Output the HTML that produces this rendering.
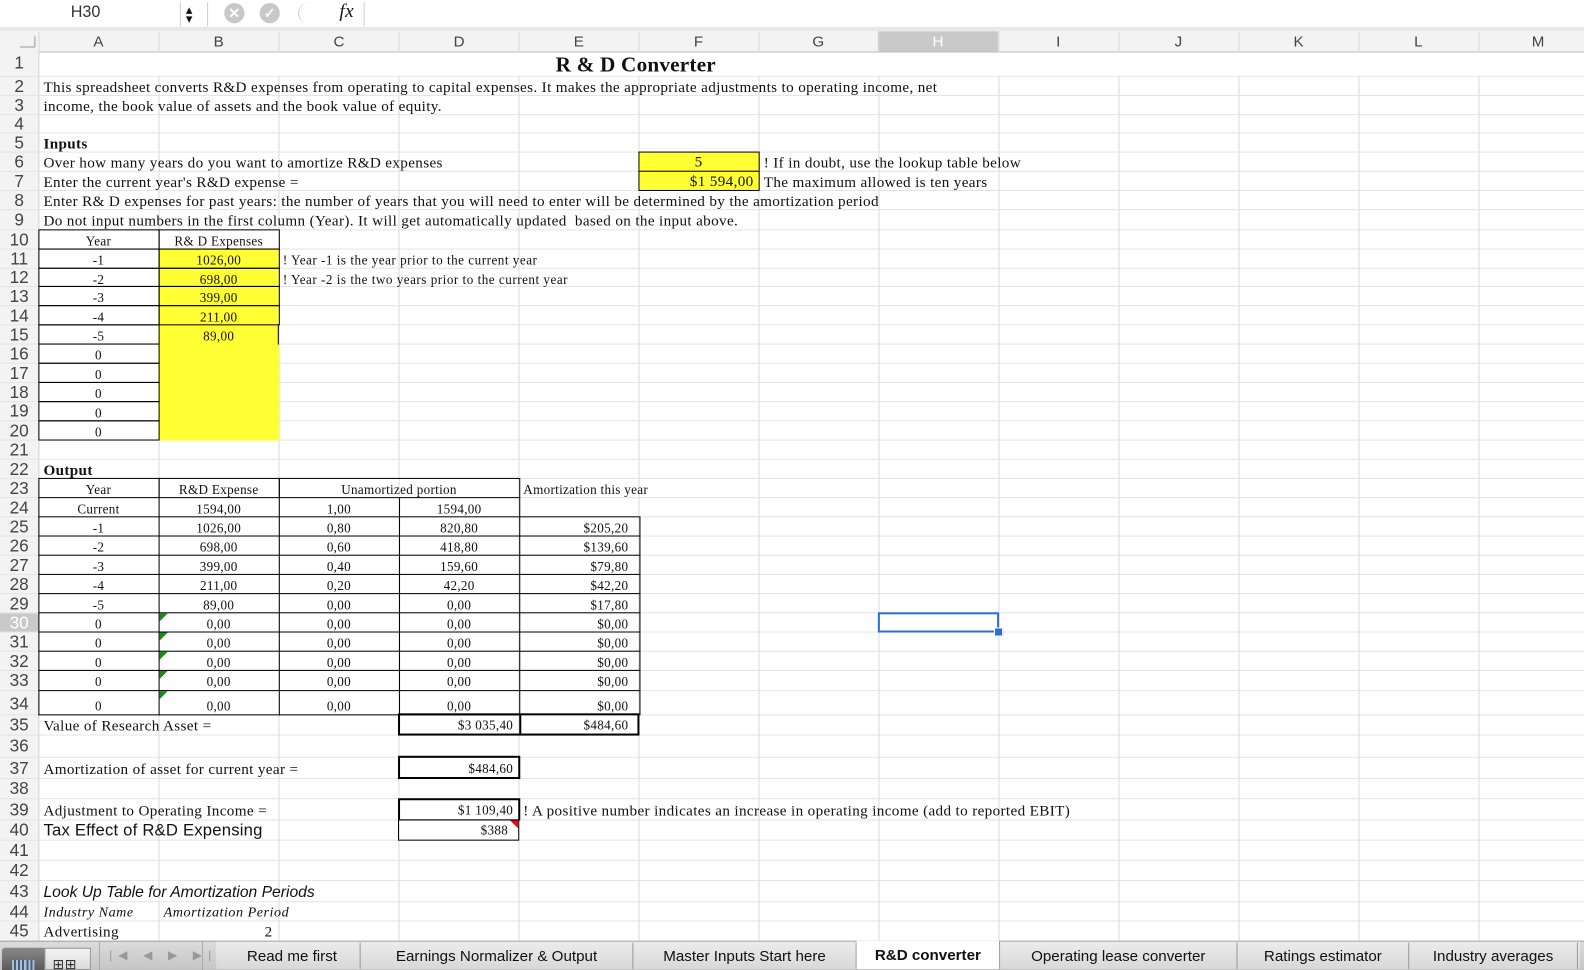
<!DOCTYPE html>
<html><head><meta charset="utf-8"><style>
html,body{margin:0;padding:0;width:1584px;height:970px;overflow:hidden;background:#fff}
#w{position:absolute;left:0;top:0;width:1568px;height:960px;transform:scale(1.0102,1.0104);transform-origin:0 0;overflow:hidden}
.a{position:absolute}
.t{position:absolute;font-family:"Liberation Serif",serif;font-size:15px;letter-spacing:0.35px;line-height:16px;padding-top:2px;white-space:nowrap;color:#111}
.s{font-size:13px;letter-spacing:0.3px}
.c{text-align:center}
.r{text-align:right}
.rl{position:absolute;left:0;width:1568px;height:1px;background:#e4e4e4}
.rn{position:absolute;left:0;width:38px;text-align:center;font-family:"Liberation Sans",sans-serif;font-size:17px;color:#444;line-height:18px;padding-top:1px}
.ch{position:absolute;top:33px;height:18px;text-align:center;font-family:"Liberation Sans",sans-serif;font-size:15px;color:#444;line-height:18px}
.bx{position:absolute;border:1px solid #000;box-sizing:border-box}
.y{background:#ffff33}
.g{position:absolute;width:0;height:0;border-top:8px solid #1a8a1a;border-right:8px solid transparent}
.tab{position:absolute;top:933px;height:26px;line-height:24px;font-family:"Liberation Sans",sans-serif;font-size:15px;color:#111;text-align:center;border-right:1px solid #999;box-sizing:border-box}
</style></head><body><div id="w">
<div class="a" style="left:0;top:0;width:1568px;height:27px;background:#fff;border-bottom:1px solid #bbb"></div>
<div class="a" style="left:0;top:27px;width:1568px;height:4px;background:#e8e8e8"></div>
<div class="t" style="left:70px;top:3px;font-family:'Liberation Sans',sans-serif;font-size:16px;letter-spacing:0;color:#333">H30</div>
<div class="a" style="left:178px;top:2px;width:1px;height:24px;background:#ccc"></div>
<div class="t" style="left:184px;top:3px;font-size:13px;font-family:'Liberation Sans',sans-serif;line-height:9px">▴<br>▾</div>
<div class="a" style="left:205px;top:2px;width:1px;height:24px;background:#ccc"></div>
<div class="a" style="left:222px;top:3px;width:20px;height:20px;border-radius:50%;background:#c8c8c8;color:#fff;font:bold 14px/20px 'Liberation Sans',sans-serif;text-align:center">✕</div>
<div class="a" style="left:257px;top:3px;width:20px;height:20px;border-radius:50%;background:#c8c8c8;color:#fff;font:bold 14px/20px 'Liberation Sans',sans-serif;text-align:center">✓</div>
<div class="a" style="left:295px;top:2px;width:22px;height:22px;border-radius:50%;border-left:1px solid #ccc"></div>
<div class="t" style="left:336px;top:0px;font-style:italic;font-size:19px;line-height:20px">fx</div>
<div class="a" style="left:360px;top:2px;width:1px;height:24px;background:#ccc"></div>
<div class="a" style="left:0;top:31px;width:1568px;height:20px;background:#f3f3f3;border-bottom:1px solid #bbb"></div>
<div class="a" style="left:869px;top:31px;width:119px;height:20px;background:#c9c9c9"></div>
<div class="a" style="left:0;top:51px;width:38px;height:880px;background:#f3f3f3;border-right:1px solid #bbb"></div>
<div class="a" style="left:0;top:607px;width:38px;height:19px;background:#c9c9c9"></div>
<div class="a" style="left:20px;top:46px;width:14px;height:1px;background:#999"></div>
<div class="a" style="left:34px;top:36px;width:1px;height:11px;background:#999"></div>
<div class="a" style="left:38px;top:31px;width:1530px;height:900px;background:repeating-linear-gradient(to right,#d8d8d8 0,#d8d8d8 1px,transparent 1px,transparent 118.8px)"></div>
<div class="ch" style="left:38px;width:119px">A</div><div class="ch" style="left:157px;width:119px">B</div><div class="ch" style="left:276px;width:119px">C</div><div class="ch" style="left:395px;width:119px">D</div><div class="ch" style="left:514px;width:118px">E</div><div class="ch" style="left:632px;width:119px">F</div><div class="ch" style="left:751px;width:118px">G</div><div class="ch" style="left:869px;width:119px;color:#fff">H</div><div class="ch" style="left:988px;width:119px">I</div><div class="ch" style="left:1107px;width:119px">J</div><div class="ch" style="left:1226px;width:119px">K</div><div class="ch" style="left:1345px;width:118px">L</div><div class="ch" style="left:1463px;width:119px">M</div>
<div class="rl" style="top:75px"></div><div class="rl" style="top:94px"></div><div class="rl" style="top:113px"></div><div class="rl" style="top:131px"></div><div class="rl" style="top:150px"></div><div class="rl" style="top:169px"></div><div class="rl" style="top:188px"></div><div class="rl" style="top:207px"></div><div class="rl" style="top:227px"></div><div class="rl" style="top:246px"></div><div class="rl" style="top:265px"></div><div class="rl" style="top:283px"></div><div class="rl" style="top:302px"></div><div class="rl" style="top:321px"></div><div class="rl" style="top:340px"></div><div class="rl" style="top:359px"></div><div class="rl" style="top:378px"></div><div class="rl" style="top:397px"></div><div class="rl" style="top:416px"></div><div class="rl" style="top:435px"></div><div class="rl" style="top:454px"></div><div class="rl" style="top:473px"></div><div class="rl" style="top:492px"></div><div class="rl" style="top:511px"></div><div class="rl" style="top:530px"></div><div class="rl" style="top:549px"></div><div class="rl" style="top:568px"></div><div class="rl" style="top:587px"></div><div class="rl" style="top:606px"></div><div class="rl" style="top:625px"></div><div class="rl" style="top:644px"></div><div class="rl" style="top:663px"></div><div class="rl" style="top:683px"></div><div class="rl" style="top:707px"></div><div class="rl" style="top:727px"></div><div class="rl" style="top:749px"></div><div class="rl" style="top:770px"></div><div class="rl" style="top:790px"></div><div class="rl" style="top:811px"></div><div class="rl" style="top:831px"></div><div class="rl" style="top:851px"></div><div class="rl" style="top:871px"></div><div class="rl" style="top:892px"></div><div class="rl" style="top:911px"></div>
<div class="rn" style="top:53px">1</div><div class="rn" style="top:76px">2</div><div class="rn" style="top:95px">3</div><div class="rn" style="top:113px">4</div><div class="rn" style="top:132px">5</div><div class="rn" style="top:151px">6</div><div class="rn" style="top:170px">7</div><div class="rn" style="top:189px">8</div><div class="rn" style="top:208px">9</div><div class="rn" style="top:228px">10</div><div class="rn" style="top:247px">11</div><div class="rn" style="top:265px">12</div><div class="rn" style="top:284px">13</div><div class="rn" style="top:303px">14</div><div class="rn" style="top:322px">15</div><div class="rn" style="top:341px">16</div><div class="rn" style="top:360px">17</div><div class="rn" style="top:379px">18</div><div class="rn" style="top:397px">19</div><div class="rn" style="top:417px">20</div><div class="rn" style="top:436px">21</div><div class="rn" style="top:455px">22</div><div class="rn" style="top:474px">23</div><div class="rn" style="top:493px">24</div><div class="rn" style="top:512px">25</div><div class="rn" style="top:531px">26</div><div class="rn" style="top:550px">27</div><div class="rn" style="top:569px">28</div><div class="rn" style="top:588px">29</div><div class="rn" style="top:607px;color:#fff">30</div><div class="rn" style="top:626px">31</div><div class="rn" style="top:645px">32</div><div class="rn" style="top:664px">33</div><div class="rn" style="top:687px">34</div><div class="rn" style="top:708px">35</div><div class="rn" style="top:729px">36</div><div class="rn" style="top:751px">37</div><div class="rn" style="top:771px">38</div><div class="rn" style="top:792px">39</div><div class="rn" style="top:812px">40</div><div class="rn" style="top:832px">41</div><div class="rn" style="top:852px">42</div><div class="rn" style="top:873px">43</div><div class="rn" style="top:893px">44</div><div class="rn" style="top:912px">45</div>
<div class="a" style="left:39px;top:52px;width:1529px;height:23px;background:#fff"></div>
<div class="t" style="left:550px;top:51px;font-size:21px;letter-spacing:0.2px;line-height:22px;font-weight:bold">R &amp; D Converter</div>
<div class="t" style="left:43px;top:77px">This spreadsheet converts R&amp;D expenses from operating to capital expenses. It makes the appropriate adjustments to operating income, net</div>
<div class="t" style="left:43px;top:96px">income, the book value of assets and the book value of equity.</div>
<div class="t" style="left:43px;top:133px;font-weight:bold">Inputs</div>
<div class="t" style="left:43px;top:152px">Over how many years do you want to amortize R&amp;D expenses</div>
<div class="t" style="left:43px;top:171px">Enter the current year's R&amp;D expense =</div>
<div class="t" style="left:43px;top:190px">Enter R&amp; D expenses for past years: the number of years that you will need to enter will be determined by the amortization period</div>
<div class="t" style="left:43px;top:209px">Do not input numbers in the first column (Year). It will get automatically updated&nbsp; based on the input above.</div>
<div class="bx y" style="left:632px;top:150px;width:120px;height:20px"></div>
<div class="bx y" style="left:632px;top:169px;width:120px;height:20px"></div>
<div class="t c" style="left:632px;top:151px;width:119px">5</div>
<div class="t r" style="left:632px;top:170px;width:114px">$1 594,00</div>
<div class="t" style="left:756px;top:152px">! If in doubt, use the lookup table below</div>
<div class="t" style="left:756px;top:171px">The maximum allowed is ten years</div>
<div class="a y" style="left:157px;top:246px;width:119px;height:190px"></div>
<div class="bx" style="left:38px;top:227px;width:120px;height:20px"></div><div class="bx" style="left:157px;top:227px;width:120px;height:20px"></div>
<div class="bx" style="left:38px;top:246px;width:120px;height:20px"></div><div class="bx" style="left:157px;top:246px;width:120px;height:20px"></div>
<div class="bx" style="left:38px;top:265px;width:120px;height:19px"></div><div class="bx" style="left:157px;top:265px;width:120px;height:19px"></div>
<div class="bx" style="left:38px;top:283px;width:120px;height:20px"></div><div class="bx" style="left:157px;top:283px;width:120px;height:20px"></div>
<div class="bx" style="left:38px;top:302px;width:120px;height:20px"></div><div class="bx" style="left:157px;top:302px;width:120px;height:20px"></div>
<div class="bx" style="left:38px;top:321px;width:120px;height:20px"></div><div class="a" style="left:275px;top:321px;width:1px;height:20px;background:#000"></div>
<div class="bx" style="left:38px;top:340px;width:120px;height:20px"></div>
<div class="bx" style="left:38px;top:359px;width:120px;height:20px"></div>
<div class="bx" style="left:38px;top:378px;width:120px;height:20px"></div>
<div class="bx" style="left:38px;top:397px;width:120px;height:20px"></div>
<div class="bx" style="left:38px;top:416px;width:120px;height:20px"></div>
<div class="t s c" style="left:38px;top:229px;width:119px">Year</div><div class="t s c" style="left:157px;top:229px;width:119px">R&amp; D Expenses</div>
<div class="t s c" style="left:38px;top:248px;width:119px">-1</div><div class="t s c" style="left:157px;top:248px;width:119px">1026,00</div>
<div class="t s c" style="left:38px;top:267px;width:119px">-2</div><div class="t s c" style="left:157px;top:267px;width:119px">698,00</div>
<div class="t s c" style="left:38px;top:285px;width:119px">-3</div><div class="t s c" style="left:157px;top:285px;width:119px">399,00</div>
<div class="t s c" style="left:38px;top:304px;width:119px">-4</div><div class="t s c" style="left:157px;top:304px;width:119px">211,00</div>
<div class="t s c" style="left:38px;top:323px;width:119px">-5</div><div class="t s c" style="left:157px;top:323px;width:119px">89,00</div>
<div class="t s c" style="left:38px;top:342px;width:119px">0</div><div class="t s c" style="left:38px;top:361px;width:119px">0</div><div class="t s c" style="left:38px;top:380px;width:119px">0</div><div class="t s c" style="left:38px;top:399px;width:119px">0</div><div class="t s c" style="left:38px;top:418px;width:119px">0</div>
<div class="t s" style="left:280px;top:248px;letter-spacing:0.5px">! Year -1 is the year prior to the current year</div>
<div class="t s" style="left:280px;top:267px;letter-spacing:0.5px">! Year -2 is the two years prior to the current year</div>
<div class="t" style="left:43px;top:456px;font-weight:bold">Output</div>
<div class="bx" style="left:38px;top:473px;width:120px;height:20px"></div><div class="bx" style="left:157px;top:473px;width:120px;height:20px"></div><div class="bx" style="left:276px;top:473px;width:239px;height:20px"></div>
<div class="t s c" style="left:38px;top:475px;width:119px">Year</div><div class="t s c" style="left:157px;top:475px;width:119px">R&amp;D Expense</div><div class="t s c" style="left:276px;top:475px;width:238px">Unamortized portion</div><div class="t s" style="left:518px;top:475px">Amortization this year</div>
<div class="a" style="left:38px;top:492px;width:477px;height:216px;background:linear-gradient(#000,#000) 119px 0/1px 100% no-repeat,linear-gradient(#000,#000) 238px 0/1px 100% no-repeat,linear-gradient(#000,#000) 357px 0/1px 100% no-repeat,linear-gradient(#000,#000) 0 0/1px 100% no-repeat,linear-gradient(#000,#000) 476px 0/1px 100% no-repeat"></div>
<div class="a" style="left:514px;top:511px;width:119px;height:197px;border-right:1px solid #000"></div>
<div class="a" style="left:38px;top:511px;width:595px;height:1px;background:#000"></div><div class="a" style="left:38px;top:530px;width:595px;height:1px;background:#000"></div><div class="a" style="left:38px;top:549px;width:595px;height:1px;background:#000"></div><div class="a" style="left:38px;top:568px;width:595px;height:1px;background:#000"></div><div class="a" style="left:38px;top:587px;width:595px;height:1px;background:#000"></div><div class="a" style="left:38px;top:606px;width:595px;height:1px;background:#000"></div><div class="a" style="left:38px;top:625px;width:595px;height:1px;background:#000"></div><div class="a" style="left:38px;top:644px;width:595px;height:1px;background:#000"></div><div class="a" style="left:38px;top:663px;width:595px;height:1px;background:#000"></div><div class="a" style="left:38px;top:683px;width:595px;height:1px;background:#000"></div><div class="a" style="left:38px;top:707px;width:477px;height:1px;background:#000"></div>
<div class="g" style="left:158px;top:607px"></div><div class="g" style="left:158px;top:626px"></div><div class="g" style="left:158px;top:645px"></div><div class="g" style="left:158px;top:664px"></div><div class="g" style="left:158px;top:684px"></div>
<div class="t s c" style="left:38px;top:494px;width:119px">Current</div><div class="t s c" style="left:157px;top:494px;width:119px">1594,00</div><div class="t s c" style="left:276px;top:494px;width:119px">1,00</div><div class="t s c" style="left:395px;top:494px;width:119px">1594,00</div>
<div class="t s c" style="left:38px;top:513px;width:119px">-1</div><div class="t s c" style="left:157px;top:513px;width:119px">1026,00</div><div class="t s c" style="left:276px;top:513px;width:119px">0,80</div><div class="t s c" style="left:395px;top:513px;width:119px">820,80</div><div class="t s r" style="left:514px;top:513px;width:108px">$205,20</div>
<div class="t s c" style="left:38px;top:532px;width:119px">-2</div><div class="t s c" style="left:157px;top:532px;width:119px">698,00</div><div class="t s c" style="left:276px;top:532px;width:119px">0,60</div><div class="t s c" style="left:395px;top:532px;width:119px">418,80</div><div class="t s r" style="left:514px;top:532px;width:108px">$139,60</div>
<div class="t s c" style="left:38px;top:551px;width:119px">-3</div><div class="t s c" style="left:157px;top:551px;width:119px">399,00</div><div class="t s c" style="left:276px;top:551px;width:119px">0,40</div><div class="t s c" style="left:395px;top:551px;width:119px">159,60</div><div class="t s r" style="left:514px;top:551px;width:108px">$79,80</div>
<div class="t s c" style="left:38px;top:570px;width:119px">-4</div><div class="t s c" style="left:157px;top:570px;width:119px">211,00</div><div class="t s c" style="left:276px;top:570px;width:119px">0,20</div><div class="t s c" style="left:395px;top:570px;width:119px">42,20</div><div class="t s r" style="left:514px;top:570px;width:108px">$42,20</div>
<div class="t s c" style="left:38px;top:589px;width:119px">-5</div><div class="t s c" style="left:157px;top:589px;width:119px">89,00</div><div class="t s c" style="left:276px;top:589px;width:119px">0,00</div><div class="t s c" style="left:395px;top:589px;width:119px">0,00</div><div class="t s r" style="left:514px;top:589px;width:108px">$17,80</div>
<div class="t s c" style="left:38px;top:608px;width:119px">0</div><div class="t s c" style="left:157px;top:608px;width:119px">0,00</div><div class="t s c" style="left:276px;top:608px;width:119px">0,00</div><div class="t s c" style="left:395px;top:608px;width:119px">0,00</div><div class="t s r" style="left:514px;top:608px;width:108px">$0,00</div>
<div class="t s c" style="left:38px;top:627px;width:119px">0</div><div class="t s c" style="left:157px;top:627px;width:119px">0,00</div><div class="t s c" style="left:276px;top:627px;width:119px">0,00</div><div class="t s c" style="left:395px;top:627px;width:119px">0,00</div><div class="t s r" style="left:514px;top:627px;width:108px">$0,00</div>
<div class="t s c" style="left:38px;top:646px;width:119px">0</div><div class="t s c" style="left:157px;top:646px;width:119px">0,00</div><div class="t s c" style="left:276px;top:646px;width:119px">0,00</div><div class="t s c" style="left:395px;top:646px;width:119px">0,00</div><div class="t s r" style="left:514px;top:646px;width:108px">$0,00</div>
<div class="t s c" style="left:38px;top:665px;width:119px">0</div><div class="t s c" style="left:157px;top:665px;width:119px">0,00</div><div class="t s c" style="left:276px;top:665px;width:119px">0,00</div><div class="t s c" style="left:395px;top:665px;width:119px">0,00</div><div class="t s r" style="left:514px;top:665px;width:108px">$0,00</div>
<div class="t s c" style="left:38px;top:689px;width:119px">0</div><div class="t s c" style="left:157px;top:689px;width:119px">0,00</div><div class="t s c" style="left:276px;top:689px;width:119px">0,00</div><div class="t s c" style="left:395px;top:689px;width:119px">0,00</div><div class="t s r" style="left:514px;top:689px;width:108px">$0,00</div>
<div class="t" style="left:43px;top:709px">Value of Research Asset =</div>
<div class="a" style="left:394px;top:706px;width:239px;height:22px;border:2px solid #000;box-sizing:border-box;background:linear-gradient(#000,#000) 118px 0/2px 100% no-repeat"></div>
<div class="t s r" style="left:395px;top:708px;width:113px">$3 035,40</div><div class="t s r" style="left:514px;top:708px;width:108px">$484,60</div>
<div class="t" style="left:43px;top:752px">Amortization of asset for current year =</div>
<div class="a" style="left:394px;top:748px;width:121px;height:23px;border:2px solid #000;box-sizing:border-box"></div>
<div class="t s r" style="left:395px;top:751px;width:113px">$484,60</div>
<div class="t" style="left:43px;top:793px">Adjustment to Operating Income =</div>
<div class="a" style="left:394px;top:790px;width:121px;height:22px;border:2px solid #000;border-bottom-width:1px;box-sizing:border-box"></div>
<div class="t s r" style="left:395px;top:792px;width:113px">$1 109,40</div>
<div class="t" style="left:518px;top:793px">! A positive number indicates an increase in operating income (add to reported EBIT)</div>
<div class="t" style="left:43px;top:812px;font-family:'Liberation Sans',sans-serif;font-size:16.5px;letter-spacing:0.2px">Tax Effect of R&amp;D Expensing</div>
<div class="bx" style="left:394px;top:811px;width:120px;height:21px"></div>
<div class="a" style="left:505px;top:812px;width:0;height:0;border-top:8px solid #e01010;border-left:8px solid transparent"></div>
<div class="t s r" style="left:395px;top:812px;width:108px">$388</div>
<div class="t" style="left:43px;top:874px;font-family:'Liberation Sans',sans-serif;font-style:italic;font-size:15.5px;letter-spacing:0">Look Up Table for Amortization Periods</div>
<div class="t" style="left:43px;top:894px;font-style:italic;font-size:14px;letter-spacing:0.5px">Industry Name</div>
<div class="t" style="left:162px;top:894px;font-style:italic;font-size:14px;letter-spacing:0.5px">Amortization Period</div>
<div class="t" style="left:43px;top:913px">Advertising</div>
<div class="t" style="left:262px;top:913px">2</div>
<div class="a" style="left:869px;top:606px;width:120px;height:20px;border:2px solid #2a6fd6;box-sizing:border-box"></div>
<div class="a" style="left:984px;top:621px;width:7px;height:7px;background:#2a6fd6;border:1px solid #fff"></div>
<div class="a" style="left:0;top:931px;width:1568px;height:29px;background:linear-gradient(#dcdcdc,#c4c4c4);border-top:1px solid #999"></div>
<div class="a" style="left:2px;top:938px;width:42px;height:22px;background:linear-gradient(#8a8a8a,#5a5a5a);border-radius:3px 0 0 0"></div>
<div class="a" style="left:12px;top:950px;width:22px;height:10px;background:repeating-linear-gradient(90deg,#9cc4f0 0,#9cc4f0 2px,#5a5a5a 2px,#5a5a5a 4px)"></div>
<div class="a" style="left:44px;top:938px;width:46px;height:22px;background:linear-gradient(#f4f4f4,#dadada);border:1px solid #999;box-sizing:border-box"></div>
<div class="t" style="left:52px;top:944px;font-family:'Liberation Sans',sans-serif;font-size:14px;color:#333">⊞⊞</div>
<div class="a" style="left:98px;top:932px;width:1px;height:28px;background:#aaa"></div>
<div class="t" style="left:108px;top:935px;font-family:'Liberation Sans',sans-serif;font-size:12px;color:#999;letter-spacing:6px">|◀ ◀ ▶ ▶|</div>
<div class="a" style="left:200px;top:932px;width:1px;height:28px;background:#aaa"></div>
<div class="a" style="left:214px;top:932px;width:1350px;height:27px;background:linear-gradient(#ececec,#d8d8d8)"></div>
<div class="tab" style="left:222px;width:135px;padding-top:2px">Read me first</div>
<div class="tab" style="left:357px;width:270px;padding-top:2px">Earnings Normalizer &amp; Output</div>
<div class="tab" style="left:627px;width:221px;padding-top:2px">Master Inputs Start here</div>
<div class="tab" style="left:848px;width:142px;background:#fff;font-weight:bold;top:931px;height:28px;padding-top:3px">R&amp;D converter</div>
<div class="tab" style="left:990px;width:235px;padding-top:2px">Operating lease converter</div>
<div class="tab" style="left:1225px;width:170px;padding-top:2px">Ratings estimator</div>
<div class="tab" style="left:1395px;width:167px;padding-top:2px">Industry averages</div>
</div></body></html>
